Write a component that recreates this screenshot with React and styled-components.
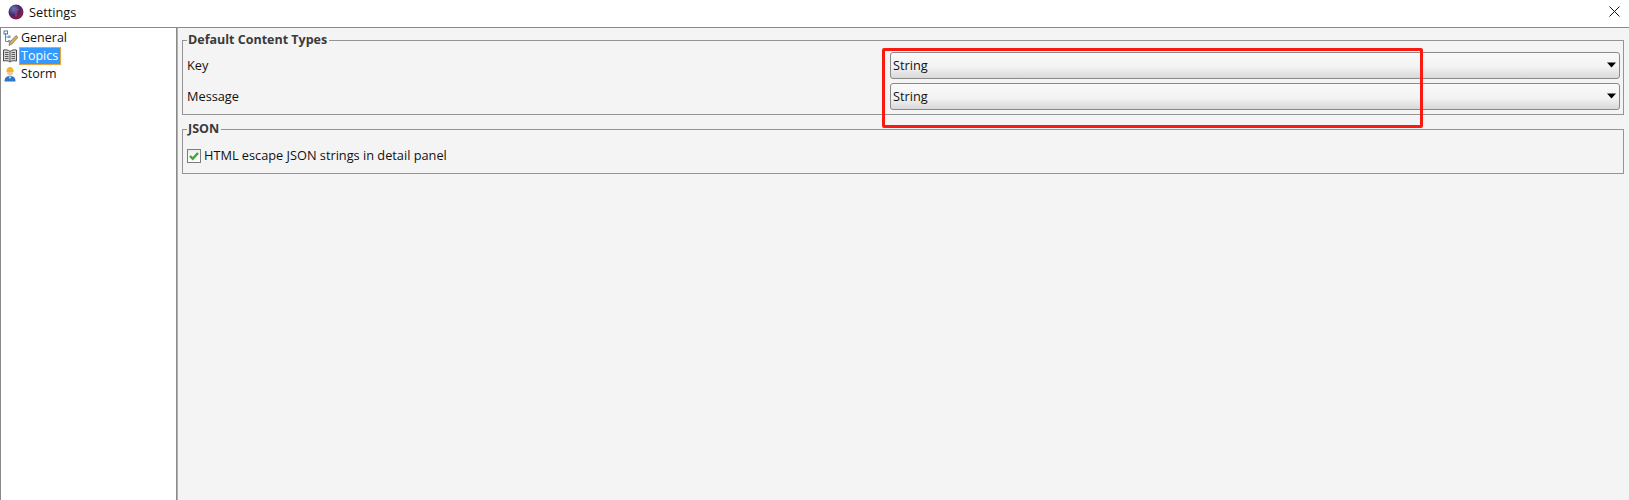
import styled, { createGlobalStyle } from 'styled-components'

const GlobalStyle = createGlobalStyle`
  html, body {
    margin: 0;
    padding: 0;
    background: #f4f4f4;
  }
  * {
    box-sizing: border-box;
  }
`

const Window = styled.div`
  position: relative;
  width: 1629px;
  height: 500px;
  overflow: hidden;
  display: flex;
  flex-direction: column;
  font-family: "Open Sans", "Noto Sans", sans-serif;
  font-size: 12.75px;
  color: #111;
  background: #f4f4f4;
`

const TitleBar = styled.header`
  height: 28px;
  flex: none;
  display: flex;
  align-items: center;
  justify-content: space-between;
  padding: 0 9px 4px 8px;
  background: #fff;
  border-bottom: 1px solid #8a8a8a;
`

const TitleLeft = styled.div`
  display: flex;
  align-items: center;
  gap: 5px;
`

const Body = styled.div`
  flex: 1;
  display: flex;
  min-height: 0;
`

const Tree = styled.nav`
  width: 177px;
  flex: none;
  padding-top: 1px;
  background: #fff;
  border-left: 1px solid #8a8a8a;
  border-right: 1px solid #8a8a8a;
`

const TreeRow = styled.div`
  height: 18px;
  display: flex;
  align-items: center;
  gap: 1px;
  padding-left: 1px;
  font-size: 12.5px;
`

const TreeLabel = styled.span`
  padding: 0 2px 0 1px;
  height: 18px;
  line-height: 16px;
  border: 1px solid ${props => (props.$selected ? '#e8a33d' : 'transparent')};
  background: ${props => (props.$selected ? '#3399ff' : 'transparent')};
  color: ${props => (props.$selected ? '#fff' : '#111')};
`

const Content = styled.main`
  flex: 1;
  display: flex;
  flex-direction: column;
  gap: 6px;
  padding: 4px 5px 0 4px;
  border-left: 1px solid #b0b0b0;
`

const Group = styled.fieldset`
  margin: 0;
  padding: 0 3px 4px 4px;
  border: 1px solid #949494;
  min-width: 0;
`

const GroupTitle = styled.legend`
  margin-left: 0;
  padding: 0 2px 0 1px;
  font-weight: 700;
  font-size: 12.5px;
  line-height: 16px;
  color: #3a3a3a;
`

const Row = styled.div`
  display: flex;
  align-items: center;
  height: 27px;
  margin-top: 4px;
`

const RowLabel = styled.label`
  width: 703px;
  flex: none;
  margin-top: -1px;
`

const Combo = styled.div`
  flex: 1;
  height: 27px;
  display: flex;
  align-items: center;
  justify-content: space-between;
  padding: 0 3px 1px 2px;
  border: 1px solid #8a8a8a;
  border-radius: 3px;
  background: linear-gradient(#f9f9f9 0%, #f3f3f3 55%, #d9d9d9 100%);
`

const CheckRow = styled.div`
  display: flex;
  align-items: center;
  gap: 3px;
  height: 27px;
  margin-top: 5px;
`

const CheckText = styled.span`
  margin-top: -2px;
`

const CheckBox = styled.span`
  width: 14px;
  height: 14px;
  display: flex;
  align-items: center;
  justify-content: center;
  border: 1px solid #7d7d7d;
  background: linear-gradient(#eeeeee, #ffffff);
`

const Highlight = styled.div`
  position: absolute;
  left: 882px;
  top: 48px;
  width: 541px;
  height: 80px;
  border: 3px solid #fb1a12;
  border-radius: 2px;
  pointer-events: none;
`

const AppIcon = () => (
  <svg width="16" height="16" viewBox="0 0 16 16">
    <defs>
      <radialGradient id="orb" cx="35%" cy="30%" r="80%">
        <stop offset="0" stopColor="#6f78b8" />
        <stop offset="0.5" stopColor="#46296f" />
        <stop offset="1" stopColor="#a01c3a" />
      </radialGradient>
    </defs>
    <circle cx="8" cy="8" r="7.500" fill="url(#orb)" />
    <path d="M5.500 5.500h5M8 5.500v7" stroke="#b9445f" strokeWidth="1.200" fill="none" />
  </svg>
)

const CloseIcon = () => (
  <svg width="11" height="11" viewBox="0 0 11 11">
    <path d="M.5.5l10 10M10.500.5l-10 10" stroke="#111" strokeWidth="1" fill="none" />
  </svg>
)

const GeneralIcon = () => (
  <svg width="16" height="16" viewBox="0 0 16 16">
    <path d="M3.500 3v8.500h3M3.500 7h3" stroke="#6b86a8" fill="none" />
    <rect x="2" y="1" width="3.500" height="3" fill="none" stroke="#4f7fb5" />
    <rect x="6" y="5.500" width="2.500" height="2.500" fill="#7ea3c9" />
    <rect x="6" y="10" width="2.500" height="2.500" fill="#7ea3c9" />
    <path d="M7 15.500l.8-3.200L14 5.500l2 1.800-6.200 6.800z" fill="#dcae4f" stroke="#6f6a55" strokeWidth=".7" />
  </svg>
)

const TopicsIcon = () => (
  <svg width="16" height="16" viewBox="0 0 16 16">
    <path d="M8 3.500C6.500 2 3.500 1.500 1.500 2v11C3.500 12.500 6.500 12.500 8 14c1.500-1.500 4.500-1.500 6.500-1V2C12.500 1.500 9.500 2 8 3.500z" fill="#d6d6d6" stroke="#4a4a4a" />
    <path d="M8 3.500V14M3 4.500h3.500M3 6.500h3.500M3 8.500h3.500M3 10.500h3.500M9.500 4.500H13M9.500 6.500H13M9.500 8.500H13M9.500 10.500H13" stroke="#5c5c5c" fill="none" />
  </svg>
)

const StormIcon = () => (
  <svg width="16" height="16" viewBox="0 0 16 16">
    <path d="M2.500 15.500c0-4 2-5.500 5.500-5.500s5.500 1.500 5.500 5.500z" fill="#2f76c9" />
    <path d="M6.500 10.500h3L8 13z" fill="#cfe2f5" />
    <circle cx="8" cy="7" r="2.800" fill="#f0c79c" />
    <path d="M4.300 6C4.300 2.500 6 1 8 1s3.700 1.500 3.700 5z" fill="#efb81f" />
  </svg>
)

const CheckMark = () => (
  <svg width="10" height="10" viewBox="0 0 10 10">
    <path d="M1 5l2.700 2.700L9 2" stroke="#3fa535" strokeWidth="2.400" fill="none" />
  </svg>
)

const ComboArrow = () => (
  <svg width="9" height="6" viewBox="0 0 9 6">
    <path d="M0 .5h9L4.500 5.500z" fill="#000" />
  </svg>
)

const treeItems = [
  { label: 'General', Icon: GeneralIcon },
  { label: 'Topics', Icon: TopicsIcon, selected: true },
  { label: 'Storm', Icon: StormIcon },
]

const App = () => (
  <Window>
    <GlobalStyle />
    <TitleBar>
      <TitleLeft>
        <AppIcon />
        <span>Settings</span>
      </TitleLeft>
      <CloseIcon />
    </TitleBar>
    <Body>
      <Tree>
        {treeItems.map(({ label, Icon, selected }) => (
          <TreeRow key={label}>
            <Icon />
            <TreeLabel $selected={selected}>{label}</TreeLabel>
          </TreeRow>
        ))}
      </Tree>
      <Content>
        <Group>
          <GroupTitle>Default Content Types</GroupTitle>
          <Row>
            <RowLabel>Key</RowLabel>
            <Combo>
              <span>String</span>
              <ComboArrow />
            </Combo>
          </Row>
          <Row>
            <RowLabel>Message</RowLabel>
            <Combo>
              <span>String</span>
              <ComboArrow />
            </Combo>
          </Row>
        </Group>
        <Group>
          <GroupTitle>JSON</GroupTitle>
          <CheckRow>
            <CheckBox>
              <CheckMark />
            </CheckBox>
            <CheckText>HTML escape JSON strings in detail panel</CheckText>
          </CheckRow>
        </Group>
      </Content>
    </Body>
    <Highlight />
  </Window>
)

export default App
